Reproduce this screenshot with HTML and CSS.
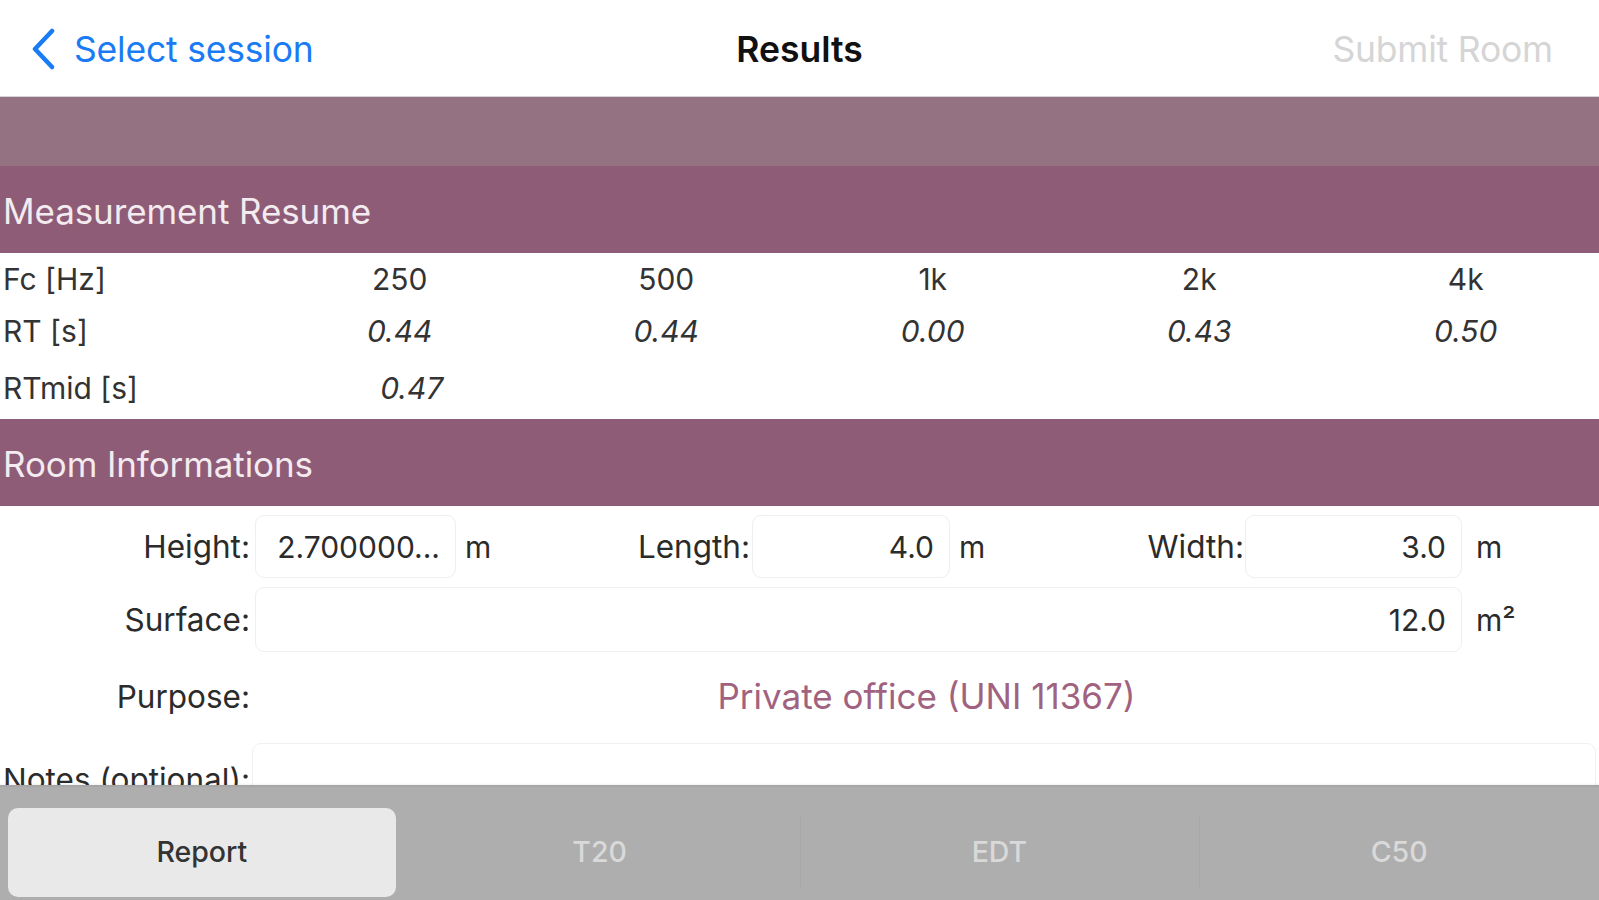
FILE: index.html
```html
<!DOCTYPE html>
<html lang="en">
<head>
<meta charset="utf-8">
<title>Results</title>
<link rel="stylesheet" href="styles.css">
</head>
<body>
<div class="app">
  <header class="navbar">
    <div class="nav-left">
      <svg class="chevron" width="26" height="42" viewBox="0 0 26 42"><path d="M22 3 L5 21 L22 39" fill="none" stroke="#1a7cf5" stroke-width="4.5" stroke-linecap="round" stroke-linejoin="round"/></svg>
      <span class="back-label">Select session</span>
    </div>
    <div class="nav-title">Results</div>
    <div class="nav-right">Submit Room</div>
  </header>

  <main class="content">
    <div class="band"></div>
    <div class="section-header">Measurement Resume</div>
    <div class="table">
      <div class="trow">
        <div class="tcell label">Fc [Hz]</div>
        <div class="tcell">250</div>
        <div class="tcell">500</div>
        <div class="tcell">1k</div>
        <div class="tcell">2k</div>
        <div class="tcell">4k</div>
      </div>
      <div class="trow">
        <div class="tcell label">RT [s]</div>
        <div class="tcell val">0.44</div>
        <div class="tcell val">0.44</div>
        <div class="tcell val">0.00</div>
        <div class="tcell val">0.43</div>
        <div class="tcell val">0.50</div>
      </div>
      <div class="trow trow-mid">
        <div class="tcell label">RTmid [s]</div>
        <div class="tcell val mid">0.47</div>
        <div class="tcell"></div>
        <div class="tcell"></div>
        <div class="tcell"></div>
        <div class="tcell"></div>
      </div>
    </div>
    <div class="section-header">Room Informations</div>
    <div class="form">
      <div class="frow">
        <div class="flabel">Height:</div>
        <div class="field f-height trunc">2.700000...</div>
        <div class="unit">m</div>
        <div class="flabel f-lab2">Length:</div>
        <div class="field f-length">4.0</div>
        <div class="unit">m</div>
        <div class="flabel f-lab3">Width:</div>
        <div class="field f-width">3.0</div>
        <div class="unit unit-wide">m</div>
      </div>
      <div class="frow">
        <div class="flabel">Surface:</div>
        <div class="field f-surface">12.0</div>
        <div class="unit unit-wide">m²</div>
      </div>
      <div class="frow purpose-row">
        <div class="flabel">Purpose:</div>
        <div class="purpose">Private office (UNI 11367)</div>
      </div>
      <div class="frow notes-row">
        <div class="flabel notes-label">Notes (optional):</div>
        <div class="field f-notes"></div>
      </div>
    </div>
  </main>

  <nav class="tabbar">
    <div class="tab active">Report</div>
    <div class="tab">T20</div>
    <div class="tab sep">EDT</div>
    <div class="tab sep">C50</div>
  </nav>
</div>
</body>
</html>
```

FILE: styles.css
```css
* { box-sizing: border-box; }
html, body { margin: 0; padding: 0; }
body {
  font-family: Inter, "Liberation Sans", Arial, sans-serif;
  color: #2b2b2b;
  background: #ffffff;
}
.app {
  width: 1599px;
  height: 900px;
  display: flex;
  flex-direction: column;
  overflow: hidden;
}

/* Nav bar */
.navbar {
  height: 97px;
  flex: none;
  display: flex;
  align-items: center;
  justify-content: space-between;
  padding: 3px 46px 0 30px;
  position: relative;
  background: #ffffff;
  border-bottom: 1px solid #d9d2d5;
}
.nav-left {
  display: flex;
  align-items: center;
  gap: 18px;
  color: #1a7cf5;
  font-size: 35.5px;
  letter-spacing: -0.2px;
}
.chevron { display: block; margin-top: -2px; }
.nav-title {
  position: absolute;
  left: 0; right: 0;
  text-align: center;
  font-size: 35.5px;
  font-weight: 600;
  color: #111;
  pointer-events: none;
}
.nav-right {
  font-size: 35.5px;
  color: #d5d5d5;
  letter-spacing: -0.2px;
}

/* Content */
.content {
  flex: 1;
  overflow: hidden;
  min-height: 0;
}
.band {
  height: 69px;
  background: #957282;
}
.section-header {
  height: 87px;
  background: #8e5c76;
  color: #f3ebef;
  font-size: 35px;
  display: flex;
  align-items: center;
  padding-left: 3px;
  padding-top: 3px;
  letter-spacing: -0.1px;
}

/* Table */
.table {
  padding-bottom: 5px;
}
.trow {
  display: grid;
  grid-template-columns: repeat(6, 1fr);
  height: 52px;
  align-items: center;
  font-size: 30px;
}
.trow-mid { margin-top: 5px; }
.tcell { text-align: center; color: #333; }
.tcell.label { text-align: left; padding-left: 3px; }
.tcell.val { font-style: italic; }
.tcell.mid { padding-left: 24px; }

/* Form */
.form {
  padding-top: 9px;
}
.frow {
  display: flex;
  align-items: center;
  height: 63px;
  margin-bottom: 10px;
  font-size: 31.5px;
}
.flabel {
  width: 250px;
  flex: none;
  text-align: right;
  color: #2b2b2b;
  white-space: nowrap;
}
.f-lab2, .f-lab3 { width: 255px; }
.field {
  height: 63px;
  background: #fff;
  border: 1px solid #efefef;
  border-radius: 9px;
  display: flex;
  align-items: center;
  justify-content: flex-end;
  padding-right: 15px;
  flex: none;
  color: #2b2b2b;
  font-size: 30px;
}
.f-height { margin-left: 5px; width: 201px; }
.f-length { margin-left: 2px; width: 198px; }
.f-width { margin-left: 1px; width: 217px; }
.f-surface { margin-left: 5px; width: 1207px; height: 65px; }
.unit {
  width: 30px;
  margin-left: 9px;
  flex: none;
  font-size: 30px;
}
.unit-wide { margin-left: 14px; width: 60px; }

.purpose-row {
  height: 70px;
  margin-top: 2px;
  margin-bottom: 12px;
}
.purpose {
  flex: 1;
  text-align: center;
  color: #a0627f;
  font-size: 35px;
  padding-left: 4px;
}
.notes-row { height: 66px; align-items: flex-start; }
.notes-label { padding-top: 17px; }
.f-notes {
  margin-left: 2px;
  margin-right: 3px;
  flex: 1;
  height: 66px;
}

/* Tab bar */
.tabbar {
  height: 115px;
  flex: none;
  background: #aeaeae;
  border-top: 2px solid #a6a6a6;
  display: grid;
  grid-template-columns: repeat(4, 1fr);
  padding: 21px 0 3px 0;
  box-shadow: 0 -1px 2px rgba(0,0,0,0.06);
}
.tab {
  display: flex;
  align-items: center;
  justify-content: center;
  color: #d9d9d9;
  font-size: 28.5px;
  font-weight: 500;
  position: relative;
  padding-bottom: 2px;
}
.tab.active {
  background: #e9e9e9;
  color: #333;
  border-radius: 10px;
  margin: 0 4px 0 8px;
}
.tab.sep::before {
  content: "";
  position: absolute;
  left: 0;
  top: 8px;
  bottom: 10px;
  width: 1px;
  background: #a8a8a8;
}
```
